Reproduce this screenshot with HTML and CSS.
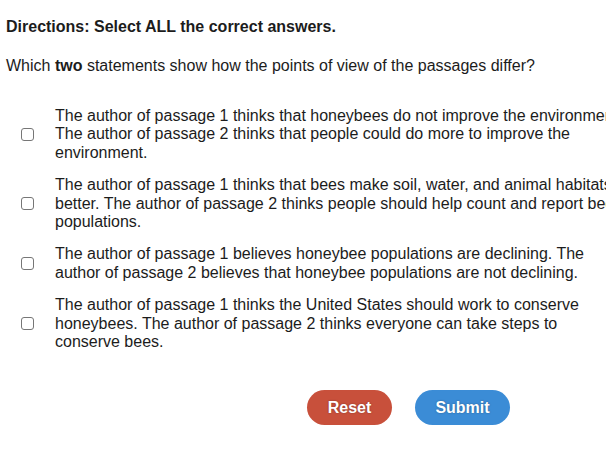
FILE: index.html
```html
<!DOCTYPE html>
<html>
<head>
<meta charset="utf-8">
<link rel="stylesheet" href="styles.css">
</head>
<body>
<div class="page">
  <p class="directions">Directions: Select ALL the correct answers.</p>
  <p class="question">Which <b>two</b> statements show how the points of view of the passages differ?</p>
  <div class="options">
    <label class="option"><span class="box"></span><span class="text">The author of passage 1 thinks that honeybees do not improve the environment. The author of passage 2 thinks that people could do more to improve the environment.</span></label>
    <label class="option"><span class="box"></span><span class="text">The author of passage 1 thinks that bees make soil, water, and animal habitats better. The author of passage 2 thinks people should help count and report bee populations.</span></label>
    <label class="option"><span class="box"></span><span class="text">The author of passage 1 believes honeybee populations are declining. The author of passage 2 believes that honeybee populations are not declining.</span></label>
    <label class="option"><span class="box"></span><span class="text">The author of passage 1 thinks the United States should work to conserve honeybees. The author of passage 2 thinks everyone can take steps to conserve bees.</span></label>
  </div>
  <div class="actions">
    <button class="btn reset">Reset</button>
    <button class="btn submit">Submit</button>
  </div>
</div>
</body>
</html>
```
FILE: styles.css
```css
html, body {
  margin: 0;
  padding: 0;
  overflow: hidden;
  background: #fff;
}
.page {
  width: 640px;
  font-family: "Liberation Sans", Arial, sans-serif;
  color: #1c1c1c;
  padding: 18px 0 0 6px;
}
.directions {
  margin: 0;
  font-weight: bold;
  font-size: 16px;
  line-height: 18px;
}
.question {
  margin: 21px 0 0 0;
  font-size: 16px;
  line-height: 18px;
}
.options {
  margin-top: 32px;
  display: flex;
  flex-direction: column;
  gap: 14px;
}
.option {
  display: flex;
  align-items: center;
}
.box {
  flex: none;
  width: 11px;
  height: 11px;
  border: 1px solid #767676;
  border-radius: 3px;
  margin-left: 15px;
  margin-right: 21px;
}
.text {
  width: 569px;
  font-size: 16px;
  line-height: 18.4px;
}
.actions {
  margin-top: 39px;
  display: flex;
  gap: 23px;
  padding-left: 301px;
}
.btn {
  border: none;
  height: 35px;
  border-radius: 18px;
  color: #fff;
  font-family: "Liberation Sans", Arial, sans-serif;
  font-weight: bold;
  font-size: 16px;
  text-shadow: 0 0 2px rgba(0,0,0,0.35);
  padding: 0;
}
.reset {
  width: 85px;
  background: #c8503b;
}
.submit {
  width: 95px;
  background: #3b8cd6;
}
```
